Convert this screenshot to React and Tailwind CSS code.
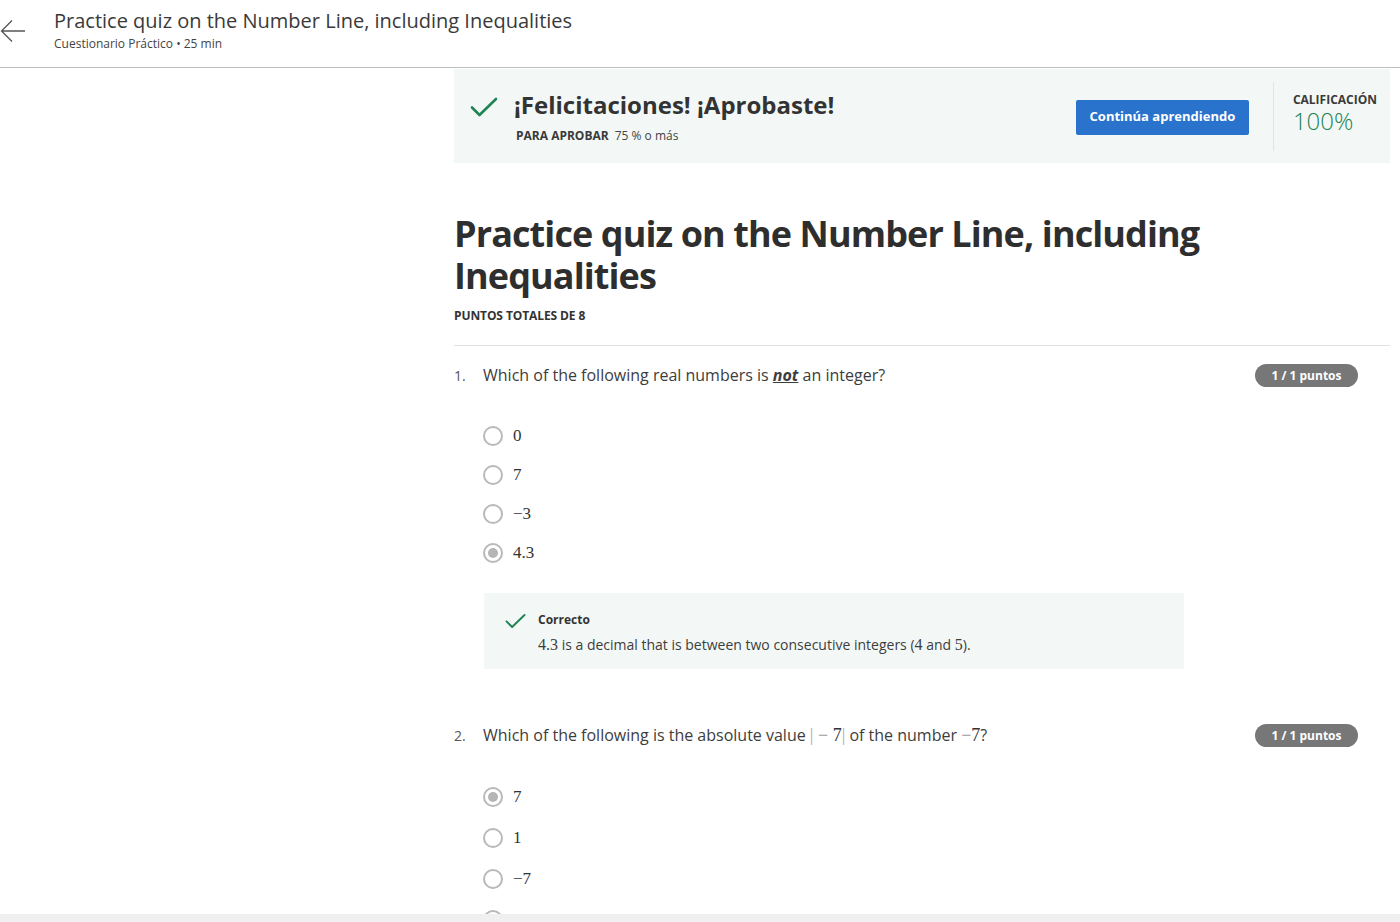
import React from "react";

const ui = { fontFamily: '"Open Sans", "Liberation Sans", sans-serif' };
const math = { fontFamily: '"Liberation Serif", "DejaVu Serif", serif' };

function Check({ className }) {
  return (
    <svg viewBox="0 0 28 20" className={className} fill="none">
      <path d="M2 10.5 L9.5 18 L26 2" stroke="#1f8354" strokeWidth="2.6" strokeLinecap="round" strokeLinejoin="round" />
    </svg>
  );
}

function Radio({ selected }) {
  return (
    <span className="w-[20px] h-[20px] rounded-full border-2 border-[#b9b9b9] flex items-center justify-center shrink-0 bg-white">
      {selected && <span className="w-[10px] h-[10px] rounded-full bg-[#b5b5b5]" />}
    </span>
  );
}

function Badge() {
  return (
    <span className="mt-px h-[23px] w-[103px] rounded-full bg-[#777777] text-white text-[12px] font-bold flex items-center justify-center shrink-0">
      1 / 1 puntos
    </span>
  );
}

function Options({ items, selected, rowH }) {
  return (
    <div className="flex flex-col mt-[29px]">
      {items.map((it, i) => (
        <div key={i} className={`flex items-center gap-[10px] ${rowH}`}>
          <Radio selected={i === selected} />
          <span className="text-[17px] text-[#333]" style={math}>{it}</span>
        </div>
      ))}
    </div>
  );
}

export default function App() {
  return (
    <div className="w-[1400px] h-[922px] flex flex-col overflow-hidden bg-white text-[#333]" style={ui}>
      <header className="h-[68px] border-b border-[#bdbdbd] flex items-start shrink-0">
        <div className="w-[54px] pt-[19px]">
          <svg viewBox="0 0 26 24" className="w-[26px] h-[24px]" fill="none">
            <path d="M25 12 H2 M12 1.5 L1.5 12 L12 22.5" stroke="#555" strokeWidth="1.3" />
          </svg>
        </div>
        <div className="pt-[7px]">
          <div className="text-[20px] leading-[28px] text-[#3a3a3a]">Practice quiz on the Number Line, including Inequalities</div>
          <div className="mt-px text-[12px] leading-[16px] text-[#444]">Cuestionario Práctico • 25 min</div>
        </div>
      </header>

      <main className="flex-1 overflow-hidden grid grid-cols-[454px_936px]">
        <div />
        <div className="flex flex-col">
          <section className="mt-px h-[94px] bg-[#f3f8f6] flex items-center justify-between">
            <div className="flex items-start pl-[16px]">
              <Check className="w-[28px] h-[20px] mt-[8px]" />
              <div className="ml-[16px]">
                <div className="text-[24px] leading-[32px] font-bold text-[#333]">¡Felicitaciones! ¡Aprobaste!</div>
                <div className="mt-[7px] pl-[2px] text-[12px] leading-[16px] flex gap-[6px]">
                  <span className="font-bold text-[#3a3a3a]">PARA APROBAR</span>
                  <span className="text-[#444]">75 % o más</span>
                </div>
              </div>
            </div>
            <div className="flex items-center pr-[13px]">
              <button className="mt-[2px] h-[35px] w-[173px] rounded-[2px] bg-[#2a73cc] text-white text-[13px] font-bold">
                Continúa aprendiendo
              </button>
              <div className="ml-[24px] w-px h-[69px] bg-[#e0e4e2]" />
              <div className="pl-[19px] flex flex-col -mt-[6px]">
                <span className="text-[12px] leading-[16px] font-bold text-[#3a3a3a]">CALIFICACIÓN</span>
                <span className="text-[24px] leading-[26px] text-[#1f8354] font-light">100%</span>
              </div>
            </div>
          </section>

          <h1 className="mt-[50px] text-[36px] leading-[42px] font-bold text-[#2e2e2e] tracking-[-0.9px]">
            Practice quiz on the Number Line, including Inequalities
          </h1>
          <div className="mt-[11px] text-[12px] leading-[16px] font-bold tracking-[-0.1px] text-[#333]">PUNTOS TOTALES DE 8</div>
          <hr className="mt-[21px] border-0 border-t border-[#e1e1e1]" />

          <div className="pt-[17px] pr-[32px]">
            <div className="flex items-start justify-between">
              <div className="flex items-center h-[24px]">
                <span className="w-[29px] text-[14px] text-[#555]">1.</span>
                <span className="text-[16px] text-[#3d3d3d]">
                  Which of the following real numbers is <b className="italic underline">not</b> an integer?
                </span>
              </div>
              <Badge />
            </div>
            <div className="pl-[29px]">
              <Options items={["0", "7", "−3", "4.3"]} selected={3} rowH="h-[39px]" />
              <div className="mt-[21px] ml-px w-[700px] h-[76px] bg-[#f3f8f6] flex items-start pl-[21px] pt-[19px]">
                <Check className="w-[21px] h-[16px] mt-[1px]" />
                <div className="ml-[12px]">
                  <div className="text-[12px] leading-[16px] font-bold text-[#333]">Correcto</div>
                  <div className="mt-[7px] text-[14px] leading-[20px] text-[#3d3d3d]">
                    <span className="text-[16px]" style={math}>4.3</span> is a decimal that is between two consecutive integers (
                    <span className="text-[16px]" style={math}>4</span> and <span className="text-[16px]" style={math}>5</span>).
                  </div>
                </div>
              </div>
            </div>

            <div className="mt-[54px] flex items-start justify-between">
              <div className="flex items-center h-[24px]">
                <span className="w-[29px] text-[14px] text-[#555]">2.</span>
                <span className="text-[16px] text-[#3d3d3d]">
                  Which of the following is the absolute value{" "}
                  <span className="text-[18px]" style={math}>
                    <span className="text-[#aaa]">|</span>
                    <span className="text-[#999]"> − </span>
                    <span className="text-[#333]">7</span>
                    <span className="text-[#aaa]">|</span>
                  </span>{" "}
                  of the number{" "}
                  <span className="text-[18px]" style={math}>
                    <span className="text-[#999]">−</span>
                    <span className="text-[#333]">7</span>
                  </span>
                  ?
                </span>
              </div>
              <Badge />
            </div>
            <div className="pl-[29px]">
              <Options items={["7", "1", "−7", "0"]} selected={0} rowH="h-[41px]" />
            </div>
          </div>
        </div>
      </main>

      <footer className="h-[8px] bg-[#f0f0f0] shrink-0" />
    </div>
  );
}
